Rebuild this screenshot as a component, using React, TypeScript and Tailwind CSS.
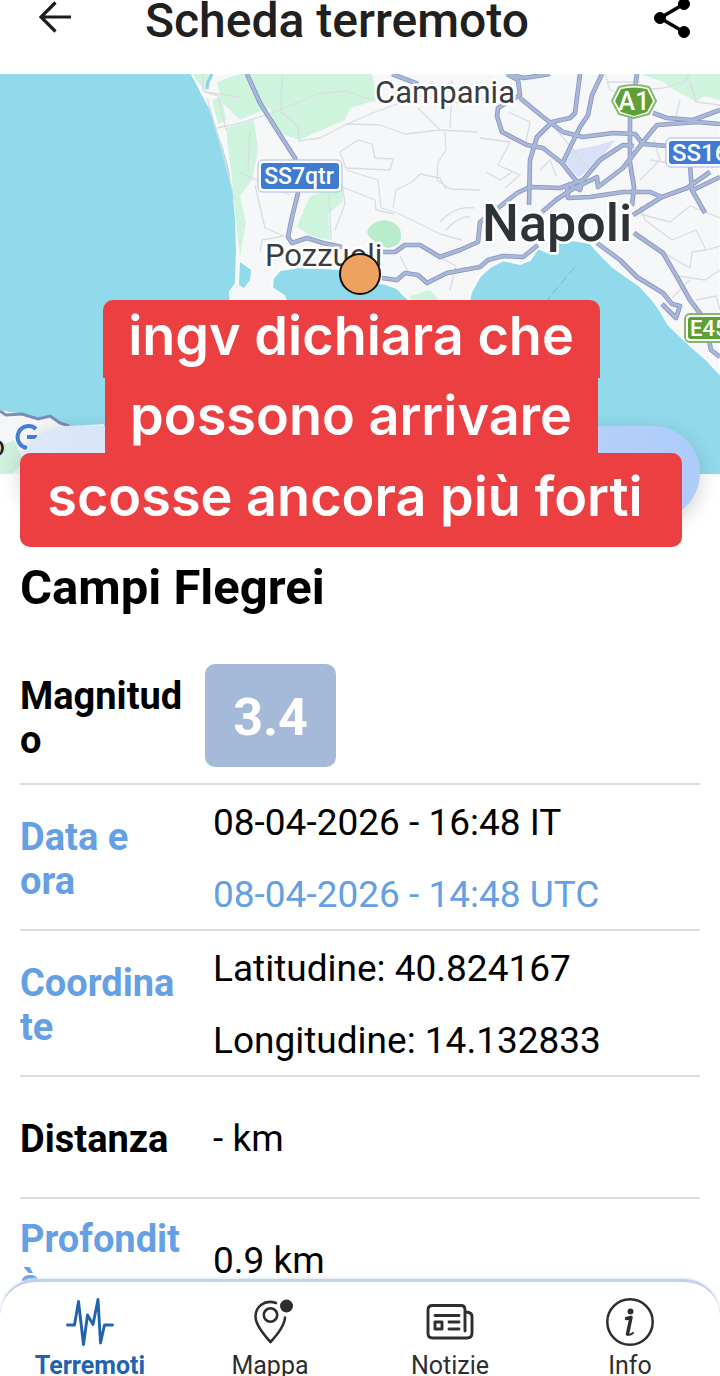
import type { ReactNode } from "react";

const LAND =
  "M192 74 L203 95 L210 108 L217 127 L224 148 L230 170 L234 195 L236 220 L237 250 L236 283 L230 292 L231 306 L288 306 L284 296 L272 288 L273 278 L280 270 L300 267 L340 269 L365 284 L383 283 L397 288 L405 296 L416 306 L468 306 L471 292 L480 276 L490 267 L503 260 L520 264 L530 260 L538 248 L547 252 L555 243 L573 240 L590 243 L602 256 L613 267 L627 277 L640 286 L652 299 L660 310 L668 324 L677 333 L692 347 L707 360 L720 374 V74 Z";

const GREENS = [
  "M192 74 L212 74 L206 92 Z",
  "M212 100 L222 96 L226 120 L218 124 Z",
  "M217 82 L240 74 H372 L378 100 L350 108 L345 120 L310 135 L300 140 L275 132 L270 108 L258 112 L240 120 L222 102 Z",
  "M226 128 L254 120 L258 150 L252 180 L240 196 L246 222 L240 258 L237 230 L232 180 Z",
  "M310 196 L345 186 L342 202 L328 214 L330 240 L310 236 L297 226 Z",
  "M640 74 H720 V100 L704 96 L696 102 L690 98 L674 90 L664 82 Z",
  "M410 296 L430 290 L444 306 H414 Z",
];

const MINOR = [
  "M203 74 L203 91 L218 96 L226 130",
  "M205 92 L240 97 M207 98 L222 150 L235 200",
  "M217 128 L240 123 L272 113 L296 103 L318 94 L345 91 L372 100",
  "M282 74 L281 112 L298 126 L299 141 L320 138 L345 125 L375 112 L420 96 L460 103 L500 96",
  "M345 124 L380 125 L405 134 L440 130 L478 132",
  "M418 108 L440 130 M452 80 L450 128",
  "M445 132 L446 150 L438 162 L437 180 L450 189 L480 190",
  "M340 152 L358 140 L372 144 L375 158 L393 159 L390 170 L346 168 L340 152",
  "M346 170 L378 180 L381 208 L397 213 L420 224 L440 234 L462 240",
  "M393 208 L396 190 L412 182 L420 174 L440 178 L446 189",
  "M343 190 L345 204 L335 230 M329 194 L331 240",
  "M345 188 L375 200 L376 210 L394 214",
  "M240 173 L257 180 L290 195 M250 130 L248 170",
  "M255 185 L265 228 L284 236 L262 240 L260 252",
  "M440 222 Q455 205 474 208 M446 230 Q460 215 470 217",
  "M400 256 L410 276 M440 257 L456 266 L450 290",
  "M480 138 L510 142 L498 165 L520 175 L505 188",
  "M508 112 L530 122 L526 142 M555 128 L590 170",
  "M605 74 L610 90 L622 94 M608 82 L640 82",
  "M640 90 L664 88 L684 82 L690 74",
  "M690 83 L696 102 L720 105 M680 100 L676 116",
  "M640 180 L660 160 L654 140 M650 160 L680 165",
  "M640 214 L670 222 L690 206 L720 218",
  "M640 206 L645 220 L672 240 L696 230 L706 250 L720 246",
  "M664 253 L690 268 L692 252 L706 250 M678 276 L705 280 L720 270",
  "M672 298 L690 280 M696 300 L716 296 L720 310",
  "M486 172 L500 180 L512 172 M540 170 L550 160 L556 176",
];

const MAJOR = [
  "M247 74 L260 103 L277 130 L295 158 L299 180 L298 193 L292 217 L288 237 L292 243 L307 238 L323 243 L342 247",
  "M383 252 L395 252 L405 245 L420 245 L440 257 L460 250 L478 242 L480 222 L498 208 L517 193 L530 187 L560 188 L583 180 L600 160 L623 145 L634 146",
  "M382 278 L397 280 L405 273 L418 275 L427 283 L447 273 L480 267 L488 260 L503 256 L523 257 L538 245",
  "M392 74 L418 84",
  "M507 74 L518 80 L520 95 L498 108 L497 116 L502 132 L527 145 L543 148 L562 163 L577 182",
  "M507 74 L524 78 L550 74",
  "M520 98 L543 117 L563 132 L583 137 L613 133 L635 134 L643 144 L668 146",
  "M580 74 L575 113 L570 118 L552 122 L537 137 L530 160 L529 205",
  "M602 74 L592 95 L588 115 L580 127 L563 162",
  "M637 74 L630 120 L630 163 L634 187 L632 206",
  "M653 113 L667 118 L693 120 L720 110",
  "M720 124 L697 122 L657 125 L647 137 L637 150 L623 168 L598 187 L597 177 L575 188",
  "M567 187 L568 198 L590 197 L623 192 L650 192 L662 197 L633 215",
  "M662 197 L687 188 L710 172 M693 190 L720 177 M690 166 L692 190 L705 213",
  "M634 233 L663 253 L677 277 L690 300 L705 320 L711 350 L720 357",
  "M597 243 L620 260 L637 277 L663 293 L672 304 L680 306 L676 318 L662 304",
  "M542 212 L556 200 L574 188 M568 184 L580 190 L582 180",
];

function RoadMap() {
  return (
    <svg
      className="block h-[400px] w-full"
      viewBox="0 74 720 400"
      preserveAspectRatio="xMidYMid slice"
      fontFamily="Roboto, sans-serif"
      role="img"
      aria-label="Mappa dell'epicentro"
    >
      <rect x="0" y="74" width="720" height="400" fill="#90daeb" />
      <path d={LAND} fill="#f6f7f9" stroke="#fbfdfd" strokeWidth="2" />
      {GREENS.map((d) => (
        <path key={d} d={d} fill="#cff4dd" />
      ))}
      <path d="M367 232 Q370 222 384 220 Q400 222 401 234 Q402 246 388 248 Q370 242 367 232 Z" fill="#b9ecca" />
      <path d="M240 262 L251 270 L250 280 L244 288 L239 285 Z" fill="#90daeb" />
      <path d="M212 74 L208 82 L207 89" fill="none" stroke="#8bd0ee" strokeWidth="3" />
      <path d="M564 160 L572 150 L595 146 L615 140 L600 160 L578 178 Z" fill="#d9e1f8" />
      <g fill="none" stroke="#dadce1" strokeWidth="1.3" strokeLinejoin="round">
        {MINOR.map((d) => (
          <path key={d} d={d} />
        ))}
      </g>
      <path d="M575 267 L562 282 L546 302" fill="none" stroke="#74bdd0" strokeWidth="1" strokeDasharray="9 4" />
      <path d="M0 410 L10 412 L22 414 L38 419 L52 416 L58 424 L70 426 L104 424 V474 H0 Z" fill="#f4f6f7" />
      <path d="M0 446 L14 440 L24 462 L12 474 H0 Z" fill="#cff0dc" />
      <path d="M0 411 L6 415 L22 414 L38 419 L50 416 L60 423 L69 426" fill="none" stroke="#7c8bb8" strokeWidth="3" />
      <g fill="none" strokeLinejoin="round">
        {MAJOR.map((d) => (
          <path key={d} d={d} stroke="#8692bf" strokeWidth="4.6" />
        ))}
        {MAJOR.map((d) => (
          <path key={d + "i"} d={d} stroke="#a9b7d9" strokeWidth="3" />
        ))}
      </g>

      <g fill="#3a3d42" stroke="#ffffff" strokeWidth="5" strokeLinejoin="round" paintOrder="stroke">
        <text x="375" y="103" fontSize="31">Campania</text>
        <text x="265" y="266" fontSize="31">Pozzuoli</text>
        <text x="482" y="241" fontSize="52" fontWeight="500" fill="#2f3338">Napoli</text>
      </g>

      <rect x="258" y="160" width="84" height="32" rx="5" fill="#ffffff" stroke="#a9bbe0" strokeWidth="1" />
      <rect x="261" y="163" width="78" height="26" rx="3" fill="#3f7bd0" />
      <text x="299" y="184" fontSize="23" fontWeight="500" fill="#fff" textAnchor="middle">SS7qtr</text>

      <rect x="666" y="138" width="84" height="29" rx="5" fill="#ffffff" stroke="#a9bbe0" strokeWidth="1" />
      <rect x="669" y="141" width="78" height="23" rx="3" fill="#3f7bd0" />
      <text x="672" y="161" fontSize="24" fontWeight="500" fill="#fff">SS16</text>

      <path d="M619 87 Q634 83 649 87 L656 101 L649 114 L634 118 L619 114 L612 101 Z" fill="#fff" stroke="#8bb872" strokeWidth="2" strokeLinejoin="round" />
      <path d="M621 89 Q634 86 647 89 L653 101 L647 112 L634 116 L621 112 L615 101 Z" fill="#5ea038" />
      <text x="634" y="110" fontSize="25" fontWeight="500" fill="#fff" textAnchor="middle">A1</text>

      <rect x="685" y="314" width="64" height="28" rx="5" fill="#fff" stroke="#86b56e" strokeWidth="2" />
      <rect x="688" y="317" width="58" height="22" rx="3" fill="#5ea038" />
      <text x="690" y="336" fontSize="22" fontWeight="500" fill="#fff">E45</text>

      <text x="-12" y="456" fontSize="30" fill="#222">o</text>
      <path d="M36 429 A11 11 0 1 0 27 448 M37 437 H27" fill="none" stroke="#4480d8" strokeWidth="4" />
      <circle cx="360" cy="274" r="20" fill="#efa15f" stroke="#111" strokeWidth="2" />
    </svg>
  );
}

function ArrowIcon() {
  return (
    <svg className="h-8 w-8" viewBox="0 0 32 32" fill="none" stroke="#1c1c1c" strokeWidth="3.2">
      <path d="M32 16 H2 M16.500 1.500 L2 16 L16.500 30.500" />
    </svg>
  );
}

function ShareIcon() {
  return (
    <svg className="h-10 w-9" viewBox="0 0 36 40" fill="#000" stroke="#000">
      <path d="M30 6 L6 20 L30 34" fill="none" strokeWidth="3.500" />
      <circle cx="6" cy="20" r="5.500" />
      <circle cx="30" cy="6" r="5.500" />
      <circle cx="30" cy="34" r="5.500" />
    </svg>
  );
}

function WaveIcon() {
  return (
    <svg className="h-12 w-12" viewBox="0 0 48 48" fill="none" stroke="#2362ae" strokeWidth="2.900" strokeLinecap="round" strokeLinejoin="round">
      <path d="M1.500 27 H8.500 L12.500 3.500 L17.500 46.500 L21.500 17 L27 26.500 L32 1.500 L34.500 45 L38.500 27 H46.500" />
    </svg>
  );
}

function PinIcon() {
  return (
    <svg className="h-12 w-12" viewBox="0 0 48 48" fill="none" stroke="#2e2e2e" strokeWidth="2.600" strokeLinecap="round" strokeLinejoin="round">
      <path d="M30 5 C18 1 9.500 9 9.500 18.500 C9.500 27 19 38 24.500 44 C31 37 38.500 28 39 19.500" />
      <circle cx="24.500" cy="17" r="6.700" />
      <circle cx="40.500" cy="8" r="6.500" fill="#2e2e2e" stroke="none" />
    </svg>
  );
}

function NewsIcon() {
  return (
    <svg className="h-12 w-12" viewBox="0 0 48 48" fill="none" stroke="#2e2e2e" strokeWidth="2.900" strokeLinecap="round" strokeLinejoin="round">
      <path d="M39 33 V12 Q39 7.500 35 7.500 H6.500 Q2 7.500 2 12 V35.500 Q2 40 6.500 40 H41 Q46 40 46 35 V18.500 Q46 14 39 14" />
      <path d="M9 17.500 H33 M23 24 H33 M23 31 H33" />
      <rect x="9" y="24" width="7" height="7" />
    </svg>
  );
}

function InfoIcon() {
  return (
    <svg className="h-12 w-12" viewBox="0 0 48 48" fill="none" stroke="#2e2e2e" strokeLinecap="round" strokeLinejoin="round">
      <circle cx="24" cy="24" r="22.700" strokeWidth="2.500" />
      <circle cx="24.500" cy="13.500" r="3" fill="#2e2e2e" stroke="none" />
      <path d="M20.500 20.500 L25 19.500 L21.500 36" strokeWidth="3.500" />
      <path d="M21.500 36.500 Q24 37.500 27 35" strokeWidth="2" />
    </svg>
  );
}

function Row({ label, blue, last, children }: { label: string; blue?: boolean; last?: boolean; children: ReactNode }) {
  return (
    <tr className={last ? "" : "border-b-2 border-[#dddddf]"}>
      <th
        scope="row"
        className={
          "pt-4 pb-3 text-left align-middle text-[38px] leading-[44px] font-bold wrap-anywhere " +
          (blue ? "text-[#659fe4]" : "text-black")
        }
      >
        {label}
      </th>
      <td className="align-middle text-[37px] leading-[72px]">{children}</td>
    </tr>
  );
}

const TABS = [
  { name: "Terremoti", icon: <WaveIcon />, active: true },
  { name: "Mappa", icon: <PinIcon /> },
  { name: "Notizie", icon: <NewsIcon /> },
  { name: "Info", icon: <InfoIcon /> },
];

export default function App() {
  return (
    <div className="flex h-screen flex-col overflow-hidden bg-white font-[Roboto,sans-serif] text-black">
      <header className="flex h-[74px] shrink-0 items-start justify-between pr-[30px] pl-[39px]">
        <div className="flex items-start gap-[74px]">
          <button type="button" aria-label="Indietro" className="mt-px">
            <ArrowIcon />
          </button>
          <h1 className="text-[48px] leading-[42px] font-medium whitespace-nowrap text-[#202020]">Scheda terremoto</h1>
        </div>
        <button type="button" aria-label="Condividi" className="-mt-0.5">
          <ShareIcon />
        </button>
      </header>

      <main className="min-h-0 flex-1 overflow-hidden">
        <section className="relative">
          <RoadMap />
          <div className="absolute inset-x-5 top-[352px] h-[94px] rounded-full bg-linear-to-r from-[#dee8f8] to-[#aecbfa] shadow-[0_6px_20px_rgba(0,0,0,0.18)]" />
          <p className="absolute inset-x-5 top-[226px] flex flex-col items-center pr-[18px] font-[Inter,sans-serif] text-[54px] leading-[72px] font-semibold whitespace-nowrap text-white">
            <span className="h-[78px] w-[497px] rounded-t-[10px] bg-[#ec3f42] text-center">ingv dichiara che</span>
            <span className="h-[75px] w-[493px] bg-[#ec3f42] pt-0.5 text-center">possono arrivare</span>
            <span className="h-[94px] w-full rounded-[10px] bg-[#ec3f42] pt-2 pr-3 text-center">scosse ancora più forti</span>
          </p>
        </section>

        <section className="px-5 pt-[84px]">
          <h2 className="text-[49px] leading-[60px] font-bold">Campi Flegrei</h2>
          <table className="mt-[30px] w-full table-fixed border-collapse">
            <colgroup>
              <col className="w-[164px]" />
              <col />
            </colgroup>
            <tbody>
              <Row label="Magnitudo">
                <div className="py-4 pl-[21px]">
                  <span className="block h-[103px] w-[131px] rounded-[10px] bg-[#a5b9d9] text-center text-[52px] leading-[107px] font-bold text-white">
                    3.4
                  </span>
                </div>
              </Row>
              <Row label="Data e ora" blue>
                <div className="-mb-0.5 pt-0.5 pl-[29px]">
                  <div>08-04-2026 - 16:48 IT</div>
                  <div className="text-[#659fe4]">08-04-2026 - 14:48 UTC</div>
                </div>
              </Row>
              <Row label="Coordinate" blue>
                <div className="-mb-0.5 pt-0.5 pl-[29px]">
                  <div>Latitudine: 40.824167</div>
                  <div>Longitudine: 14.132833</div>
                </div>
              </Row>
              <Row label="Distanza">
                <div className="-mb-0.5 pt-[26px] pb-6 pl-[29px]">- km</div>
              </Row>
              <Row label="Profondità" blue last>
                <div className="-mb-0.5 pt-[26px] pb-6 pl-[29px]">0.9 km</div>
              </Row>
            </tbody>
          </table>
        </section>
      </main>

      <nav className="relative -mt-9 h-[97px] shrink-0 overflow-hidden rounded-t-[36px] border-t-3 border-[#c3d0e8] bg-white shadow-[0_-1px_3px_#dceafa]">
        <ul className="grid grid-cols-4">
          {TABS.map((t) => (
            <li key={t.name}>
              <a
                href={"#" + t.name.toLowerCase()}
                className={
                  "flex flex-col items-center gap-1 pt-4 text-[25px] leading-8 " +
                  (t.active ? "font-bold text-[#2362ae]" : "text-[#2e2e2e]")
                }
              >
                {t.icon}
                {t.name}
              </a>
            </li>
          ))}
        </ul>
      </nav>
    </div>
  );
}
